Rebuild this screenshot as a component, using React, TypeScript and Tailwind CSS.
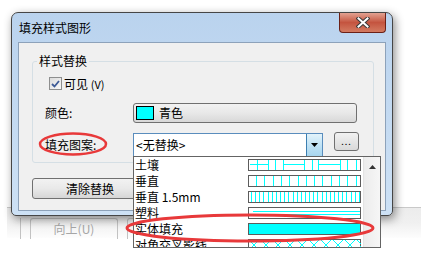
import React from "react";

const CYAN = "#00ffff";

function Swatch({ kind }: { kind: string }) {
  const lines: React.ReactNode[] = [];
  if (kind === "soil") {
    [9, 20, 27, 35, 56, 64, 70, 92, 99, 108].forEach((x) =>
      lines.push(<line key={"v" + x} x1={x + 0.5} y1={1} x2={x + 0.5} y2={11} />)
    );
    [[2, 20], [35, 56], [70, 92]].forEach(([a, b]) =>
      lines.push(<line key={"h" + a} x1={a} y1={5.5} x2={b} y2={5.5} />)
    );
  } else if (kind === "vert") {
    for (let i = 0; i < 13; i++) {
      const x = Math.round(8 + i * 8.3) + 0.5;
      lines.push(<line key={i} x1={x} y1={1} x2={x} y2={11} />);
    }
  } else if (kind === "vert15") {
    for (let i = 0; i < 27; i++) {
      const x = Math.round(3 + i * 4.15) + 0.5;
      lines.push(<line key={i} x1={x} y1={1} x2={x} y2={11} />);
    }
  } else if (kind === "plastic") {
    lines.push(<line key="a" x1={5} y1={4.5} x2={112} y2={4.5} />);
    lines.push(<line key="b" x1={1} y1={7.5} x2={112} y2={7.5} />);
  } else if (kind === "cross") {
    for (let k = 1; k < 112; k += 12) {
      lines.push(<line key={"a" + k} x1={k} y1={1} x2={k + 10} y2={11} />);
      lines.push(<line key={"b" + k} x1={k + 10} y1={1} x2={k} y2={11} />);
    }
  }
  return (
    <svg width="113" height="12" className="block shrink-0">
      <rect x="0.5" y="0.5" width="112" height="11" fill={kind === "solid" ? CYAN : "white"} stroke="#5c5c5c" />
      <g stroke={CYAN} strokeWidth="1" shapeRendering="crispEdges">
        {lines}
      </g>
    </svg>
  );
}

const items = [
  { name: "土壤", kind: "soil" },
  { name: "垂直", kind: "vert" },
  { name: "垂直 1.5mm", kind: "vert15" },
  { name: "塑料", kind: "plastic" },
  { name: "实体填充", kind: "solid" },
  { name: "对角交叉影线", kind: "cross" },
];

export default function App() {
  return (
    <div className="relative w-[421px] h-[254px] bg-white overflow-hidden font-['Noto_Sans_CJK_SC',sans-serif] text-[12px] text-black">
      {/* window behind the dialog */}
      <div className="absolute left-[7px] top-[207px] right-0 h-[31px] border-t border-[#c9c9c9] bg-gradient-to-b from-[#ececec] via-[#f0f0f0] to-[#fdfdfd] flex items-start pt-[10px] gap-[9px]">
        <div className="w-[14px] h-[21px] border-r border-[#c2c2c2]" />
        <div className="w-[88px] h-[21px] border border-b-0 border-[#c2c2c2] rounded-t-[3px] flex items-center justify-center text-[#a6a6a6] leading-[14px]">
          向上(U)
        </div>
        <div className="w-[60px] h-[21px] border border-b-0 border-[#c2c2c2] rounded-t-[3px]" />
      </div>

      {/* dialog */}
      <div className="absolute left-[11px] top-[12px] w-[382px] h-[204px] rounded-t-[7px] rounded-b-[5px] border border-[#464646] bg-gradient-to-b from-[#bad3ee] to-[#cde1f5] shadow-[2px_3px_10px_rgba(0,0,0,0.45)] flex flex-col px-[6px] pb-[4px]">
        <div className="h-[29px] flex items-start justify-between shrink-0">
          <span className="pl-[1px] mt-[8px] leading-[14px]">填充样式图形</span>
          <div className="w-[47px] h-[20px] rounded-b-[4px] border border-t-0 border-[#6b2016] bg-gradient-to-b from-[#e2a191] via-[#c4543f] to-[#d37a61] flex items-center justify-center">
            <svg width="14" height="11" viewBox="0 0 14 11">
              <path d="M2.5 1.5 L11.5 9.5 M11.5 1.5 L2.5 9.5" stroke="#3a3a3a" strokeWidth="4" strokeLinecap="square" />
              <path d="M2.5 1.5 L11.5 9.5 M11.5 1.5 L2.5 9.5" stroke="#ffffff" strokeWidth="2" strokeLinecap="square" />
            </svg>
          </div>
        </div>

        <div className="flex-1 border border-[#8da2ba] bg-[#f0f0f0] pl-[13px] pt-[18px]">
          {/* group box */}
          <div className="relative w-[342px] h-[102px] border border-[#d5dfe5] rounded-[3px] pt-[15px] pl-[12px] flex flex-col">
            <span className="absolute left-[4px] top-[-8px] bg-[#f0f0f0] px-[2px] leading-[14px]">样式替换</span>

            <div className="flex items-center h-[13px] ml-[4px] gap-[2px]">
              <div className="w-[13px] h-[13px] border border-[#8e8f8f] bg-gradient-to-br from-[#dcdcdc] to-[#f8f8f8] flex items-center justify-center">
                <svg width="9" height="8" viewBox="0 0 9 8">
                  <path d="M1 4 L3.5 6.5 L8 1" stroke="#3d5a96" strokeWidth="1.8" fill="none" />
                </svg>
              </div>
              <span className="leading-[14px]">
                可见 <span className="text-[11px]">(V)</span>
              </span>
            </div>

            <div className="flex items-center h-[20px] mt-[13px]">
              <span className="w-[88px] leading-[14px]">颜色:</span>
              <div className="w-[224px] h-[20px] rounded-[3px] border border-[#707070] bg-gradient-to-b from-[#f2f2f2] via-[#e8e8e8] to-[#d8d8d8] flex items-center pl-[2px] gap-[5px]">
                <div className="w-[18px] h-[14px] border border-black bg-[#00ffff]" />
                <span className="leading-[14px]">青色</span>
              </div>
            </div>

            <div className="flex items-start h-[24px] mt-[10px]">
              <span className="w-[88px] mt-[5px] leading-[14px]">填充图案:</span>
              <div className="w-[190px] h-[24px] border border-[#5a8dbd] bg-white flex">
                <span className="flex-1 pl-[2px] leading-[22px]">&lt;无替换&gt;</span>
                <div className="w-[16px] h-full border-l border-[#3c7fb1] bg-gradient-to-b from-[#e3f3fb] via-[#c1e3f5] to-[#a8d6ef] flex items-center justify-center">
                  <svg width="7" height="4" viewBox="0 0 7 4">
                    <path d="M0 0 H7 L3.5 4 Z" fill="#000" />
                  </svg>
                </div>
              </div>
              <div className="ml-[11px] -mt-[1px] w-[25px] h-[19px] rounded-[3px] border border-[#707070] bg-gradient-to-b from-[#f2f2f2] to-[#d9d9d9] flex items-center justify-center text-[9px] leading-[10px] tracking-[1px]">
                ...
              </div>
            </div>
          </div>

          <div className="mt-[15px] w-[116px] h-[21px] rounded-[3px] border border-[#707070] bg-gradient-to-b from-[#f2f2f2] via-[#e9e9e9] to-[#d6d6d6] flex items-center justify-center leading-[14px]">
            清除替换
          </div>
        </div>
      </div>

      {/* open drop-down list */}
      <div className="absolute left-[133px] top-[156px] w-[248px] h-[92px] border border-[#646464] bg-white flex overflow-hidden">
        <div className="w-[229px] flex flex-col">
          {items.map((it) => (
            <div key={it.name} className="h-[16px] shrink-0 flex items-center pl-[1px] pr-[2px]">
              <span className="flex-1 leading-[14px] whitespace-nowrap">{it.name}</span>
              <Swatch kind={it.kind} />
            </div>
          ))}
        </div>
        <div className="w-[17px] border-l border-[#e3e3e3] bg-gradient-to-r from-[#ececec] to-[#f6f6f6] flex justify-center pt-[8px]">
          <svg width="7" height="4" viewBox="0 0 7 4">
            <path d="M0 4 H7 L3.5 0 Z" fill="#333" />
          </svg>
        </div>
      </div>

      {/* red annotation ellipses */}
      <svg className="absolute inset-0 pointer-events-none" width="421" height="254">
        <ellipse cx="73" cy="144" rx="33" ry="10.5" fill="none" stroke="#e8393a" strokeWidth="2.5" />
        <ellipse cx="250" cy="228" rx="123" ry="13" fill="none" stroke="#e8393a" strokeWidth="3" />
      </svg>
    </div>
  );
}
